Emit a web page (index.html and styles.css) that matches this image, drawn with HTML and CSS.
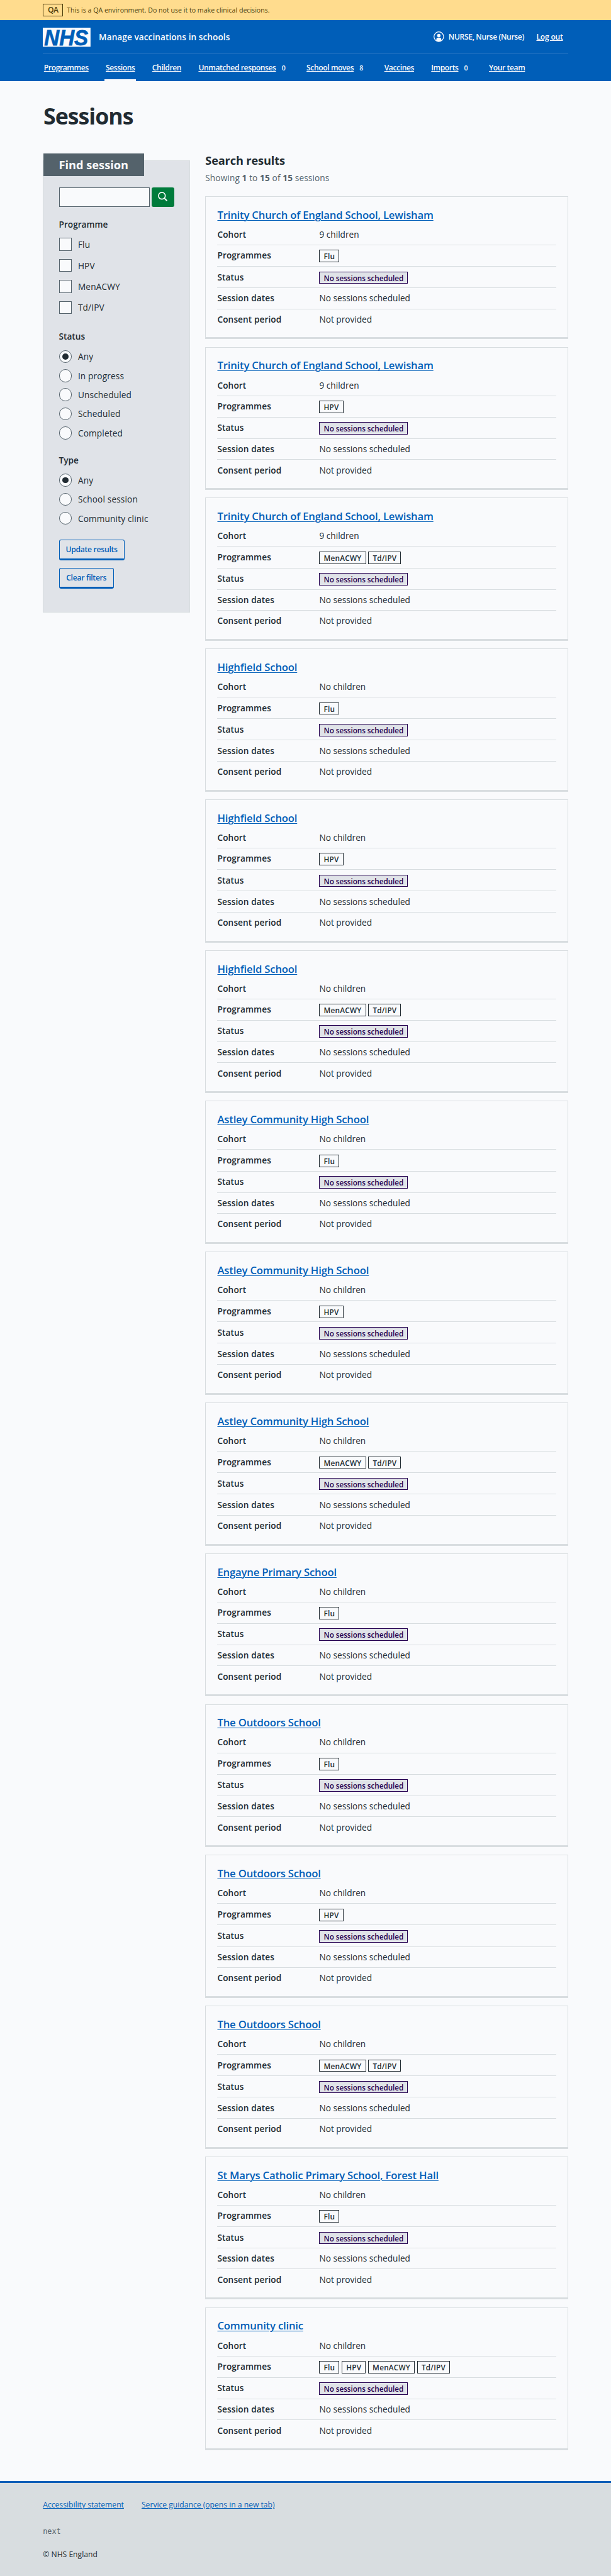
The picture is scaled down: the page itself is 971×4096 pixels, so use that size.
FILE: index.html
```html
<!DOCTYPE html>
<html lang="en">
<head>
<meta charset="utf-8">
<title>Sessions - Manage vaccinations in schools</title>
<link rel="stylesheet" href="styles.css">
</head>
<body>
<div class="page">
  <div class="environment">
    <span class="environment-tag">QA</span>
    <span>This is a QA environment. Do not use it to make clinical decisions.</span>
  </div>
  <header class="header">
    <div class="header-top">
      <svg class="logo" viewBox="0 0 100 40" role="img" aria-label="NHS">
        <rect width="100" height="40" fill="#f9fafc"/>
        <text x="3" y="36.3" textLength="92" lengthAdjust="spacingAndGlyphs" class="logo-text">NHS</text>
      </svg>
      <span class="service-name">Manage vaccinations in schools</span>
      <div class="account">
        <svg class="account-icon" viewBox="0 0 22 22">
          <circle cx="11" cy="11" r="10.1" fill="none" stroke="currentColor" stroke-width="1.7"/>
          <circle cx="11" cy="8.5" r="3.6" fill="currentColor"/>
          <path d="M5.8 19.5V17a4.2 4.2 0 0 1 4.2-4.2h2a4.2 4.2 0 0 1 4.2 4.2v2.5A10 10 0 0 1 11 21a10 10 0 0 1-5.2-1.5z" fill="currentColor"/>
        </svg>
        <span class="account-name">NURSE, Nurse (Nurse)</span>
        <a class="logout" href="#">Log out</a>
      </div>
    </div>
    <nav class="nav">
      <div class="nav-item"><a href="#">Programmes</a></div>
      <div class="nav-item nav-current"><a href="#">Sessions</a></div>
      <div class="nav-item"><a href="#">Children</a></div>
      <div class="nav-item"><a href="#">Unmatched responses</a><span class="count">0</span></div>
      <div class="nav-item"><a href="#">School moves</a><span class="count">8</span></div>
      <div class="nav-item"><a href="#">Vaccines</a></div>
      <div class="nav-item"><a href="#">Imports</a><span class="count">0</span></div>
      <div class="nav-item"><a href="#">Your team</a></div>
    </nav>
  </header>
  <main class="main">
    <h1 class="title">Sessions</h1>
    <div class="columns">
      <aside class="filters">
        <h2 class="filters-heading">Find session</h2>
        <form class="form">
          <div class="search">
            <span class="search-input"></span>
            <span class="search-button">
              <svg viewBox="0 0 20 20" class="search-icon"><circle cx="8.3" cy="8.3" r="7.1" fill="none" stroke="currentColor" stroke-width="2.2"/><path d="M13.3 13.3l5.700 5.700" stroke="currentColor" stroke-width="2.6"/></svg>
            </span>
          </div>
          <div class="legend legend-programme">Programme</div>
          <div class="check"><span class="box"></span><span>Flu</span></div>
          <div class="check"><span class="box"></span><span>HPV</span></div>
          <div class="check"><span class="box"></span><span>MenACWY</span></div>
          <div class="check"><span class="box"></span><span>Td/IPV</span></div>
          <div class="legend legend-status">Status</div>
          <div class="radio"><span class="dot dot-on"></span><span>Any</span></div>
          <div class="radio"><span class="dot"></span><span>In progress</span></div>
          <div class="radio"><span class="dot"></span><span>Unscheduled</span></div>
          <div class="radio"><span class="dot"></span><span>Scheduled</span></div>
          <div class="radio"><span class="dot"></span><span>Completed</span></div>
          <div class="legend legend-type">Type</div>
          <div class="radio"><span class="dot dot-on"></span><span>Any</span></div>
          <div class="radio"><span class="dot"></span><span>School session</span></div>
          <div class="radio"><span class="dot"></span><span>Community clinic</span></div>
          <div class="actions">
            <span class="button button-update">Update results</span>
            <span class="button button-clear">Clear filters</span>
          </div>
        </form>
      </aside>
      <section class="results">
        <h2 class="results-heading">Search results</h2>
        <p class="results-count">Showing <b>1</b> to <b>15</b> of <b>15</b> sessions</p>
        <div id="cards"></div>
      </section>
    </div>
  </main>
  <footer class="footer">
    <div class="footer-links"><a href="#">Accessibility statement</a><a href="#">Service guidance (opens in a new tab)</a></div>
    <div class="footer-version">next</div>
    <div class="footer-copy">© NHS England</div>
  </footer>
</div>
<script src="main.js"></script>
</body>
</html>
```
FILE: styles.css
```css
* { box-sizing: border-box; }
html { background: #d8dde0; }
body { margin: 0; overflow-x: hidden; }
.page {
  zoom: 0.7588;
  width: 1280px;
  font: 18px/24px "Open Sans", "Noto Sans", sans-serif;
  color: #212b32;
  background: #f9fafc;
}
h1, h2, h3, p, dl, dd { margin: 0; }

.environment {
  display: flex;
  align-items: center;
  gap: 8px;
  height: 42px;
  padding: 0 90px;
  background: #ffdc8e;
  color: #4d3c0b;
  font-size: 14px;
}
.environment-tag {
  width: 42px;
  height: 26px;
  border: 1px solid #4d3c0b;
  font-size: 16px;
  font-weight: 600;
  letter-spacing: -0.6px;
  line-height: 24px;
  text-align: center;
}

.header { height: 128px; padding: 0 90px; background: #005eb8; color: #f9fafc; }
.header-top { display: flex; align-items: center; height: 72px; border-bottom: 1px solid #2474c2; }
.logo { width: 100px; height: 40px; margin-right: 17px; overflow: visible; }
.logo-text { font: italic bold 46px "Liberation Sans", sans-serif; fill: #005eb8; stroke: #005eb8; stroke-width: 1; }
.service-name { font-weight: 600; letter-spacing: 0.07px; }
.account { display: flex; align-items: center; margin-left: auto; padding-right: 11px; font-size: 16px; }
.account-icon { width: 22px; height: 22px; margin-right: 9px; }
.account-name { width: 184px; font-weight: 600; letter-spacing: -0.5px; white-space: nowrap; }
.logout { font-weight: 600; letter-spacing: -0.3px; color: inherit; }
.nav { display: flex; gap: 31px; height: 56px; margin-left: -0.5px; font-size: 16px; font-weight: 600; letter-spacing: -0.55px; }
.nav-item { display: flex; padding: 17px 2.5px 0; border-bottom: 4px solid transparent; white-space: nowrap; }
.nav-item a { color: inherit; }
.nav-current { border-color: #f9fafc; }
.count { width: 24px; margin-left: 4px; font-size: 14px; letter-spacing: 0; text-align: center; }

.main { height: 5029px; padding: 45px 90px 0; }
.title { margin-bottom: 49px; padding-left: 1px; font-size: 47px; font-weight: 700; line-height: 56px; letter-spacing: -1.3px; }
.columns { display: flex; align-items: flex-start; gap: 32px; }

.filters { width: 308px; height: 947px; margin-top: 16px; border: 1px solid #d8dde0; background: #e0e3e8; }
.filters-heading {
  width: 212px;
  height: 48px;
  margin: -16px 0 0 -1px;
  padding-left: 33px;
  background: #54626b;
  color: #f9fafc;
  font-size: 24px;
  font-weight: 700;
  line-height: 48px;
}
.form { padding: 24px 32px 0; letter-spacing: 0.2px; }
.search { display: flex; gap: 4px; }
.search-input { width: 190px; height: 40px; border: 2px solid #54626b; background: #f9fafc; }
.search-button { display: flex; justify-content: center; width: 47.5px; height: 40px; padding-top: 9px; border-radius: 4px; background: #007b3b; color: #f9fafc; }
.search-icon { width: 20px; height: 20px; }
.legend { font-weight: 600; letter-spacing: 0; }
.legend-programme { margin: 24.7px 0 8.3px; }
.legend-status { margin: 27px 0 10px; }
.legend-type { margin: 25.3px 0 9.7px; }
.check, .radio { display: flex; align-items: center; gap: 13px; }
.check { height: 44px; }
.radio { height: 40px; }
.check span + span, .radio span + span { padding-top: 1.5px; }
.box { width: 27px; height: 27px; border: 2px solid #54626b; background: #f9fafc; }
.dot { display: grid; place-items: center; width: 27px; height: 27px; border: 2px solid #54626b; border-radius: 50%; background: #f9fafc; }
.dot-on::before { content: ""; width: 13px; height: 13px; border-radius: 50%; background: #212b32; }
.actions { display: flex; flex-direction: column; gap: 16px; padding-top: 24px; }
.button {
  height: 44px;
  border: 2px solid #005eb8;
  border-bottom-width: 4px;
  border-radius: 4px;
  color: #005eb8;
  font-size: 16px;
  font-weight: 600;
  letter-spacing: -0.35px;
  line-height: 39px;
  text-align: center;
}
.button-update { width: 137px; }
.button-clear { width: 115px; }

.results { width: 760px; }
.results-heading { font-size: 24px; font-weight: 700; line-height: 32px; letter-spacing: -0.2px; }
.results-count { margin: 9px 0 26px; color: #54626b; letter-spacing: 0.15px; }
.results-count b { font-weight: 700; }

.card { height: 300px; margin-bottom: 16px; padding: 23.5px 24px 0; border: 1px solid #d8dde0; border-bottom: 4px solid #d8dde0; }
.card-title { margin-bottom: 6px; font-size: 22px; font-weight: 600; line-height: 28px; letter-spacing: -0.25px; }
.card-title a { color: #005eb8; text-decoration-thickness: 1.5px; text-underline-offset: 2.5px; }
.row { display: flex; height: 44px; padding-top: 9.7px; border-bottom: 1px solid #d8dde0; }
.row:last-child { border-bottom: 0; }
.row-tags { height: 45px; padding-top: 10px; }
.row dt { width: 213.5px; font-weight: 600; letter-spacing: 0.12px; }
.row dd { display: flex; gap: 5px; }
.tag { height: 26px; padding: 0 8px; border: 1px solid #212b32; font-size: 15.5px; font-weight: 600; line-height: 24px; letter-spacing: 0.3px; }
.tag-status { border-color: #240050; background: #e0e3e8; color: #240050; letter-spacing: -0.08px; }

.footer { height: 198.5px; padding: 34px 90px 0; border-top: 4px solid #005eb8; background: #d8dde0; font-size: 16px; }
.footer-links { display: flex; gap: 37px; }
.footer-links a { color: #005eb8; }
.footer-version { margin-top: 32px; color: #54626b; font: 15.5px/24px "DejaVu Sans Mono", monospace; }
.footer-copy { margin-top: 24px; }
```
FILE: main.js
```js
const trinity = 'Trinity Church of England School, Lewisham';
const sessions = [
  [trinity, '9 children', ['Flu']],
  [trinity, '9 children', ['HPV']],
  [trinity, '9 children', ['MenACWY', 'Td/IPV']],
  ['Highfield School', 'No children', ['Flu']],
  ['Highfield School', 'No children', ['HPV']],
  ['Highfield School', 'No children', ['MenACWY', 'Td/IPV']],
  ['Astley Community High School', 'No children', ['Flu']],
  ['Astley Community High School', 'No children', ['HPV']],
  ['Astley Community High School', 'No children', ['MenACWY', 'Td/IPV']],
  ['Engayne Primary School', 'No children', ['Flu']],
  ['The Outdoors School', 'No children', ['Flu']],
  ['The Outdoors School', 'No children', ['HPV']],
  ['The Outdoors School', 'No children', ['MenACWY', 'Td/IPV']],
  ['St Marys Catholic Primary School, Forest Hall', 'No children', ['Flu']],
  ['Community clinic', 'No children', ['Flu', 'HPV', 'MenACWY', 'Td/IPV']]
];

document.getElementById('cards').innerHTML = sessions.map(([name, cohort, programmes]) => `
  <article class="card">
    <h3 class="card-title"><a href="#">${name}</a></h3>
    <dl>
      <div class="row"><dt>Cohort</dt><dd>${cohort}</dd></div>
      <div class="row row-tags"><dt>Programmes</dt><dd>${programmes.map(p => `<span class="tag">${p}</span>`).join('')}</dd></div>
      <div class="row row-tags"><dt>Status</dt><dd><span class="tag tag-status">No sessions scheduled</span></dd></div>
      <div class="row"><dt>Session dates</dt><dd>No sessions scheduled</dd></div>
      <div class="row"><dt>Consent period</dt><dd>Not provided</dd></div>
    </dl>
  </article>`).join('');
```
